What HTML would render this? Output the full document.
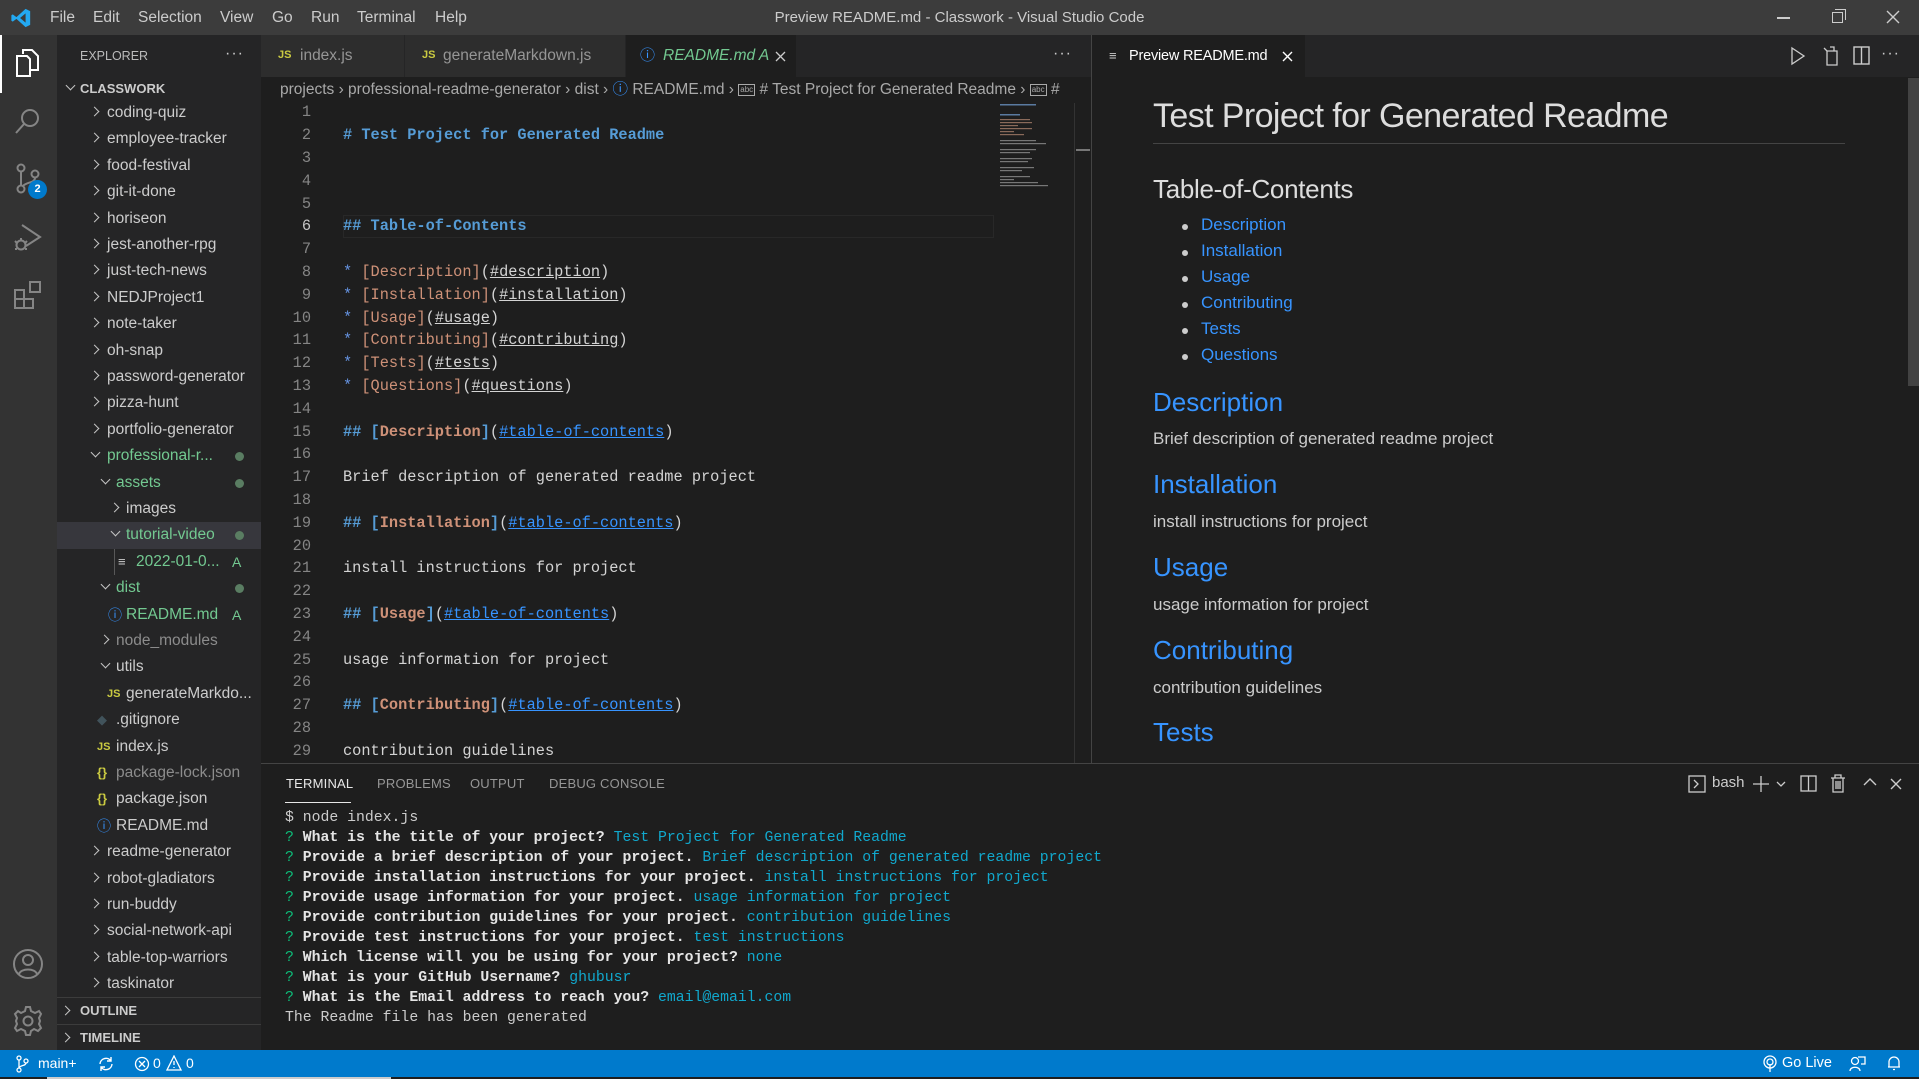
<!DOCTYPE html>
<html><head><meta charset="utf-8">
<style>
*{box-sizing:border-box;margin:0;padding:0}
body{width:1919px;height:1079px;overflow:hidden;background:#1e1e1e;font-family:"Liberation Sans",sans-serif;color:#ccc;position:relative}
.a{position:absolute}
.t{white-space:nowrap}
#title{left:0;top:0;width:1919px;height:35px;background:#3c3c3c}
.menu{top:0;height:35px;line-height:35px;font-size:15.5px;color:#ccc}
#act{left:0;top:35px;width:57px;height:1015px;background:#333}
#side{left:57px;top:35px;width:204px;height:1015px;background:#252526}
.row{position:absolute;left:0;width:204px;height:26.4px;line-height:26.4px;font-size:15.5px;color:#ccc;white-space:nowrap}
.chev{position:absolute;top:8px;width:7px;height:7px;border-right:1.5px solid #c5c5c5;border-bottom:1.5px solid #c5c5c5}
.cr{transform:rotate(-45deg)}
.cd{transform:rotate(45deg);top:6px}
.dot{position:absolute;left:178px;top:9px;width:9px;height:9px;border-radius:50%;background:#5a7d62}
.A{position:absolute;left:175px;color:#73c991;font-size:14px}
.g{color:#73c991}
.js{color:#cbcb41;font-weight:bold;font-size:11px;position:absolute}
.code{font-family:"Liberation Mono",monospace;font-size:15.3px}
.ln{position:absolute;left:270px;width:41px;text-align:right;color:#858585;height:22.8px;line-height:22.8px}
.cl{position:absolute;left:343px;height:22.8px;line-height:22.8px;white-space:pre;color:#d4d4d4}
.h{color:#569cd6;font-weight:bold}
.o{color:#ce9178}
.ob{color:#ce9178;font-weight:bold}
.u{text-decoration:underline}
.bu{color:#3794ff;text-decoration:underline}
.st{color:#6796e6}
.pv{position:absolute;left:1153px;white-space:nowrap}
.li{position:absolute;left:1201px;color:#3794ff;font-size:17px;white-space:nowrap}
.bul{position:absolute;left:1182px;width:6px;height:6px;border-radius:50%;background:#ccc}
.ph2{color:#3794ff;font-size:26px}
.pp{color:#ccc;font-size:17px}
.term{position:absolute;left:285px;font-family:"Liberation Mono",monospace;font-size:14.8px;white-space:pre;color:#ccc;height:20px;line-height:20px}
.q{color:#0dbc79}
.b{font-weight:bold;color:#e5e5e5}
.c{color:#11a8cd}
.ptab{position:absolute;top:776px;font-size:13px;color:#969696;letter-spacing:.2px}
</style></head><body>

<!-- title bar -->
<div id="title" class="a">
<svg class="a" style="left:10px;top:7px" width="22" height="22" viewBox="0 0 24 24"><path d="M17 2 L22 4.5 V19.5 L17 22 L7 13 L3 16 L1.5 15 V9 L3 8 L7 11 Z M17 7 L11 12 L17 17 Z" fill="#23a9f2"/></svg>
<div class="a menu t" style="left:50px">File</div>
<div class="a menu t" style="left:93px">Edit</div>
<div class="a menu t" style="left:138px">Selection</div>
<div class="a menu t" style="left:220px">View</div>
<div class="a menu t" style="left:272px">Go</div>
<div class="a menu t" style="left:311px">Run</div>
<div class="a menu t" style="left:357px">Terminal</div>
<div class="a menu t" style="left:435px">Help</div>
<div class="a menu t" style="left:0;width:1919px;text-align:center;font-size:15px;color:#ccc">Preview README.md - Classwork - Visual Studio Code</div>
<div class="a" style="left:1777px;top:17px;width:13px;height:1.5px;background:#ccc"></div>
<div class="a" style="left:1832px;top:12px;width:11px;height:11px;border:1.3px solid #ccc"></div>
<div class="a" style="left:1835px;top:9px;width:11px;height:11px;border-top:1.3px solid #ccc;border-right:1.3px solid #ccc"></div>
<svg class="a" style="left:1886px;top:10px" width="14" height="14"><path d="M1 1L13 13M13 1L1 13" stroke="#ccc" stroke-width="1.4"/></svg>
</div>

<!-- activity bar -->
<div id="act" class="a">
<div class="a" style="left:0;top:0;width:2px;height:58px;background:#fff"></div>
<svg class="a" style="left:14px;top:13px" width="28" height="30" viewBox="0 0 28 30" fill="none" stroke="#fff" stroke-width="2"><path d="M9 6 V2 H18 L24 8 V22 H16"/><path d="M3 8 H13 L16 11 V28 H3 Z"/></svg>
<svg class="a" style="left:14px;top:72px" width="28" height="28" viewBox="0 0 28 28" fill="none" stroke="#858585" stroke-width="2"><circle cx="16" cy="11" r="8"/><path d="M10 17 L2 26"/></svg>
<svg class="a" style="left:14px;top:128px" width="30" height="32" viewBox="0 0 30 32" fill="none" stroke="#858585" stroke-width="2"><circle cx="7" cy="5" r="3.5"/><circle cx="7" cy="26" r="3.5"/><circle cx="21" cy="11" r="3.5"/><path d="M7 9V22M21 15C21 20 12 19 9 23"/></svg>
<div class="a" style="left:28px;top:145px;width:19px;height:19px;border-radius:50%;background:#007acc;color:#fff;font-size:11px;font-weight:bold;text-align:center;line-height:19px">2</div>
<svg class="a" style="left:12px;top:187px" width="32" height="32" viewBox="0 0 32 32" fill="none" stroke="#858585" stroke-width="2"><path d="M10 3 L28 15 L14 24"/><circle cx="9" cy="23" r="4.5"/><path d="M3 19L5 21M15 19L13 21M3 27H5M13 27H15M9 18V16"/></svg>
<svg class="a" style="left:13px;top:245px" width="30" height="30" viewBox="0 0 30 30" fill="none" stroke="#858585" stroke-width="2"><rect x="2" y="10" width="9" height="9"/><rect x="2" y="19" width="9" height="9"/><rect x="11" y="19" width="9" height="9"/><rect x="17" y="2" width="10" height="10"/></svg>
<svg class="a" style="left:12px;top:913px" width="32" height="32" viewBox="0 0 32 32" fill="none" stroke="#858585" stroke-width="2"><circle cx="16" cy="16" r="14"/><circle cx="16" cy="12" r="5"/><path d="M7 26C9 20 23 20 25 26"/></svg>
<svg class="a" style="left:12px;top:970px" width="32" height="32" viewBox="0 0 32 32" fill="none" stroke="#858585" stroke-width="2"><circle cx="16" cy="16" r="4.5"/><path d="M14 2H18L19 6L23 8L27 6L29 9L27 13L28 16L27 19L29 23L26 26L22 24L19 26L18 30H14L13 26L9 24L5 26L3 23L5 19L4 16L5 13L3 9L6 6L9 8L13 6Z"/></svg>
</div>

<!-- sidebar -->
<div id="side" class="a">
<div class="a t" style="left:23px;top:0;height:42px;line-height:42px;font-size:12.5px;color:#bbb">EXPLORER</div>
<div class="a t" style="left:168px;top:0;height:38px;line-height:38px;font-size:16px;color:#ccc;letter-spacing:1px">···</div>
<div class="a" style="left:0;top:42px;width:204px;height:23px">
<div class="chev cd" style="left:10px;top:5px"></div>
<div class="a t" style="left:23px;top:0;line-height:23px;font-size:13px;font-weight:bold;color:#ccc">CLASSWORK</div>
</div>
<div class="a" style="left:0;top:65px;width:204px;height:950px">
<div class="row" style="top:0"><div class="chev cr" style="left:34px"></div><span class="a" style="left:50px">coding-quiz</span></div>
<div class="row" style="top:26.4px"><div class="chev cr" style="left:34px"></div><span class="a" style="left:50px">employee-tracker</span></div>
<div class="row" style="top:52.8px"><div class="chev cr" style="left:34px"></div><span class="a" style="left:50px">food-festival</span></div>
<div class="row" style="top:79.2px"><div class="chev cr" style="left:34px"></div><span class="a" style="left:50px">git-it-done</span></div>
<div class="row" style="top:105.6px"><div class="chev cr" style="left:34px"></div><span class="a" style="left:50px">horiseon</span></div>
<div class="row" style="top:132px"><div class="chev cr" style="left:34px"></div><span class="a" style="left:50px">jest-another-rpg</span></div>
<div class="row" style="top:158.4px"><div class="chev cr" style="left:34px"></div><span class="a" style="left:50px">just-tech-news</span></div>
<div class="row" style="top:184.8px"><div class="chev cr" style="left:34px"></div><span class="a" style="left:50px">NEDJProject1</span></div>
<div class="row" style="top:211.2px"><div class="chev cr" style="left:34px"></div><span class="a" style="left:50px">note-taker</span></div>
<div class="row" style="top:237.6px"><div class="chev cr" style="left:34px"></div><span class="a" style="left:50px">oh-snap</span></div>
<div class="row" style="top:264px"><div class="chev cr" style="left:34px"></div><span class="a" style="left:50px">password-generator</span></div>
<div class="row" style="top:290.4px"><div class="chev cr" style="left:34px"></div><span class="a" style="left:50px">pizza-hunt</span></div>
<div class="row" style="top:316.8px"><div class="chev cr" style="left:34px"></div><span class="a" style="left:50px">portfolio-generator</span></div>
<div class="row g" style="top:343.2px"><div class="chev cd" style="left:35px"></div><span class="a" style="left:50px">professional-r...</span><div class="dot"></div></div>
<div class="row g" style="top:369.6px"><div class="chev cd" style="left:45px"></div><span class="a" style="left:59px">assets</span><div class="dot"></div></div>
<div class="row" style="top:396px"><div class="chev cr" style="left:54px"></div><span class="a" style="left:69px">images</span></div>
<div class="row g" style="top:422.4px;background:#37373d"><div class="chev cd" style="left:55px"></div><span class="a" style="left:69px">tutorial-video</span><div class="dot"></div></div>
<div class="row g" style="top:448.8px"><div class="a" style="left:57px;top:0;width:1px;height:26.4px;background:#585858"></div><span class="a" style="left:61px;color:#ccc;font-size:13px">≡</span><span class="a" style="left:79px">2022-01-0...</span><span class="A">A</span></div>
<div class="row g" style="top:475.2px"><div class="chev cd" style="left:45px"></div><span class="a" style="left:59px">dist</span><div class="dot"></div></div>
<div class="row g" style="top:501.6px"><span class="a" style="left:51px;color:#3794ff;font-size:14px">ⓘ</span><span class="a" style="left:69px">README.md</span><span class="A">A</span></div>
<div class="row" style="top:528px;color:#8c8c8c"><div class="chev cr" style="left:44px"></div><span class="a" style="left:59px">node_modules</span></div>
<div class="row" style="top:554.4px"><div class="chev cd" style="left:45px"></div><span class="a" style="left:59px">utils</span></div>
<div class="row" style="top:580.8px"><span class="js" style="left:50px;top:0">JS</span><span class="a" style="left:69px">generateMarkdo...</span></div>
<div class="row" style="top:607.2px"><span class="a" style="left:40px;color:#41535b;font-size:13px">◆</span><span class="a" style="left:59px">.gitignore</span></div>
<div class="row" style="top:633.6px"><span class="js" style="left:40px;top:0">JS</span><span class="a" style="left:59px">index.js</span></div>
<div class="row" style="top:660px;color:#8c8c8c"><span class="a" style="left:40px;color:#cbcb41;font-size:13px;font-weight:bold">{}</span><span class="a" style="left:59px">package-lock.json</span></div>
<div class="row" style="top:686.4px"><span class="a" style="left:40px;color:#cbcb41;font-size:13px;font-weight:bold">{}</span><span class="a" style="left:59px">package.json</span></div>
<div class="row" style="top:712.8px"><span class="a" style="left:40px;color:#3794ff;font-size:14px">ⓘ</span><span class="a" style="left:59px">README.md</span></div>
<div class="row" style="top:739.2px"><div class="chev cr" style="left:34px"></div><span class="a" style="left:50px">readme-generator</span></div>
<div class="row" style="top:765.6px"><div class="chev cr" style="left:34px"></div><span class="a" style="left:50px">robot-gladiators</span></div>
<div class="row" style="top:792px"><div class="chev cr" style="left:34px"></div><span class="a" style="left:50px">run-buddy</span></div>
<div class="row" style="top:818.4px"><div class="chev cr" style="left:34px"></div><span class="a" style="left:50px">social-network-api</span></div>
<div class="row" style="top:844.8px"><div class="chev cr" style="left:34px"></div><span class="a" style="left:50px">table-top-warriors</span></div>
<div class="row" style="top:871.2px"><div class="chev cr" style="left:34px"></div><span class="a" style="left:50px">taskinator</span></div>
</div>
<div class="a" style="left:0;top:962px;width:204px;height:1px;background:#3c3c3c"></div>
<div class="a" style="left:0;top:963px;width:204px;height:26px"><div class="chev cr" style="left:5px;top:9px"></div><span class="a t" style="left:23px;line-height:26px;font-size:13px;font-weight:bold;color:#ccc">OUTLINE</span></div>
<div class="a" style="left:0;top:989px;width:204px;height:1px;background:#3c3c3c"></div>
<div class="a" style="left:0;top:990px;width:204px;height:26px"><div class="chev cr" style="left:5px;top:9px"></div><span class="a t" style="left:23px;line-height:26px;font-size:13px;font-weight:bold;color:#ccc">TIMELINE</span></div>
</div>

<!-- editor tabs -->
<div class="a" style="left:261px;top:35px;width:831px;height:42px;background:#252526"></div>
<div class="a" style="left:261px;top:35px;width:143px;height:42px;background:#2d2d2d"><span class="js" style="left:17px;top:14px">JS</span><span class="a t" style="left:39px;top:0;line-height:42px;font-size:15.5px;color:#969696">index.js</span></div>
<div class="a" style="left:405px;top:35px;width:220px;height:42px;background:#2d2d2d"><span class="js" style="left:17px;top:14px">JS</span><span class="a t" style="left:38px;top:0;line-height:42px;font-size:15.5px;color:#969696">generateMarkdown.js</span></div>
<div class="a" style="left:626px;top:35px;width:170px;height:42px;background:#1e1e1e"><span class="a" style="left:14px;top:0;line-height:42px;color:#3794ff;font-size:15px">ⓘ</span><span class="a t" style="left:37px;top:0;line-height:42px;font-size:15.5px;color:#73c991;font-style:italic">README.md A</span><svg class="a" style="left:149px;top:16px" width="11" height="11"><path d="M1 1L10 10M10 1L1 10" stroke="#ccc" stroke-width="1.3"/></svg></div>
<div class="a t" style="left:1053px;top:35px;line-height:38px;font-size:16px;color:#ccc;letter-spacing:1px">···</div>

<!-- breadcrumb -->
<div class="a t" style="left:280px;top:77px;height:26px;line-height:26px;font-size:15.5px;color:#a9a9a9;width:810px;overflow:hidden">projects › professional-readme-generator › dist › <span style="color:#3794ff">ⓘ</span> README.md › <span style="display:inline-block;border:1px solid #a9a9a9;font-size:8px;line-height:10px;padding:0 1px;vertical-align:2px">abc</span> # Test Project for Generated Readme › <span style="display:inline-block;border:1px solid #a9a9a9;font-size:8px;line-height:10px;padding:0 1px;vertical-align:2px">abc</span> #</div>

<!-- editor -->
<div class="a" style="left:343px;top:215px;width:651px;height:23px;border:1px solid #282828"></div>
<div class="code">
<div class="ln" style="top:101.3px">1</div>
<div class="ln" style="top:124.1px">2</div>
<div class="ln" style="top:146.9px">3</div>
<div class="ln" style="top:169.7px">4</div>
<div class="ln" style="top:192.5px">5</div>
<div class="ln" style="top:215.3px;color:#c6c6c6">6</div>
<div class="ln" style="top:238.1px">7</div>
<div class="ln" style="top:260.9px">8</div>
<div class="ln" style="top:283.7px">9</div>
<div class="ln" style="top:306.5px">10</div>
<div class="ln" style="top:329.3px">11</div>
<div class="ln" style="top:352.1px">12</div>
<div class="ln" style="top:374.9px">13</div>
<div class="ln" style="top:397.7px">14</div>
<div class="ln" style="top:420.5px">15</div>
<div class="ln" style="top:443.3px">16</div>
<div class="ln" style="top:466.1px">17</div>
<div class="ln" style="top:488.9px">18</div>
<div class="ln" style="top:511.7px">19</div>
<div class="ln" style="top:534.5px">20</div>
<div class="ln" style="top:557.3px">21</div>
<div class="ln" style="top:580.1px">22</div>
<div class="ln" style="top:602.9px">23</div>
<div class="ln" style="top:625.7px">24</div>
<div class="ln" style="top:648.5px">25</div>
<div class="ln" style="top:671.3px">26</div>
<div class="ln" style="top:694.1px">27</div>
<div class="ln" style="top:716.9px">28</div>
<div class="ln" style="top:739.7px;height:23px;overflow:hidden">29</div>

<div class="cl h" style="top:124.1px"># Test Project for Generated Readme</div>
<div class="cl h" style="top:215.3px">## Table-of-Contents</div>
<div class="cl" style="top:260.9px"><span class="st">*</span> <span class="o">[Description]</span>(<span class="u">#description</span>)</div>
<div class="cl" style="top:283.7px"><span class="st">*</span> <span class="o">[Installation]</span>(<span class="u">#installation</span>)</div>
<div class="cl" style="top:306.5px"><span class="st">*</span> <span class="o">[Usage]</span>(<span class="u">#usage</span>)</div>
<div class="cl" style="top:329.3px"><span class="st">*</span> <span class="o">[Contributing]</span>(<span class="u">#contributing</span>)</div>
<div class="cl" style="top:352.1px"><span class="st">*</span> <span class="o">[Tests]</span>(<span class="u">#tests</span>)</div>
<div class="cl" style="top:374.9px"><span class="st">*</span> <span class="o">[Questions]</span>(<span class="u">#questions</span>)</div>
<div class="cl" style="top:420.5px"><span class="h">## [</span><span class="ob">Description</span><span class="h">]</span>(<span class="bu">#table-of-contents</span>)</div>
<div class="cl" style="top:466.1px">Brief description of generated readme project</div>
<div class="cl" style="top:511.7px"><span class="h">## [</span><span class="ob">Installation</span><span class="h">]</span>(<span class="bu">#table-of-contents</span>)</div>
<div class="cl" style="top:557.3px">install instructions for project</div>
<div class="cl" style="top:602.9px"><span class="h">## [</span><span class="ob">Usage</span><span class="h">]</span>(<span class="bu">#table-of-contents</span>)</div>
<div class="cl" style="top:648.5px">usage information for project</div>
<div class="cl" style="top:694.1px"><span class="h">## [</span><span class="ob">Contributing</span><span class="h">]</span>(<span class="bu">#table-of-contents</span>)</div>
<div class="cl" style="top:739.7px;height:23px;overflow:hidden">contribution guidelines</div>
</div>

<!-- minimap -->
<svg class="a" style="left:998px;top:103px" width="76" height="85">
<g fill="#5a7aa0"><rect x="2" y="1" width="36" height="1.5"/><rect x="2" y="11" width="20" height="1.5"/></g>
<g fill="#8a6a5a"><rect x="2" y="16" width="30" height="1.2"/><rect x="2" y="19" width="32" height="1.2"/><rect x="2" y="22" width="18" height="1.2"/><rect x="2" y="25" width="32" height="1.2"/><rect x="2" y="28" width="14" height="1.2"/><rect x="2" y="31" width="24" height="1.2"/></g>
<g fill="#777"><rect x="2" y="37" width="36" height="1.2"/><rect x="2" y="40" width="46" height="1.2"/><rect x="2" y="46" width="36" height="1.2"/><rect x="2" y="49" width="30" height="1.2"/><rect x="2" y="55" width="32" height="1.2"/><rect x="2" y="58" width="28" height="1.2"/><rect x="2" y="64" width="34" height="1.2"/><rect x="2" y="67" width="22" height="1.2"/><rect x="2" y="73" width="30" height="1.2"/><rect x="2" y="76" width="14" height="1.2"/><rect x="2" y="79" width="38" height="1.2"/><rect x="2" y="82" width="48" height="1.2"/></g>
</svg>
<div class="a" style="left:1074px;top:103px;width:1px;height:660px;background:#333"></div>
<div class="a" style="left:1076px;top:149px;width:14px;height:2px;background:#777"></div>

<!-- preview group -->
<div class="a" style="left:1091px;top:35px;width:1px;height:728px;background:#444"></div>
<div class="a" style="left:1092px;top:35px;width:827px;height:42px;background:#252526"></div>
<div class="a" style="left:1092px;top:35px;width:213px;height:42px;background:#1e1e1e"><span class="a t" style="left:17px;top:0;line-height:42px;font-size:13px;color:#ccc">≡</span><span class="a t" style="left:37px;top:0;line-height:42px;font-size:14.5px;color:#fff;letter-spacing:-0.2px">Preview README.md</span><svg class="a" style="left:190px;top:16px" width="11" height="11"><path d="M1 1L10 10M10 1L1 10" stroke="#fff" stroke-width="1.4"/></svg></div>
<svg class="a" style="left:1790px;top:46px" width="16" height="20"><path d="M2 2L14 10L2 18Z" fill="none" stroke="#ccc" stroke-width="1.3"/></svg>
<svg class="a" style="left:1822px;top:45px" width="18" height="22" fill="none" stroke="#ccc" stroke-width="1.3"><path d="M5 6H15V20H5Z"/><path d="M5 6L2 3M8 2H12V6"/></svg>
<svg class="a" style="left:1853px;top:46px" width="18" height="20" fill="none" stroke="#ccc" stroke-width="1.4"><rect x="1" y="1" width="15" height="17"/><path d="M8.5 1V18"/></svg>
<div class="a t" style="left:1881px;top:35px;line-height:38px;font-size:16px;color:#ccc;letter-spacing:1px">···</div>

<div class="pv" style="top:95px;font-size:34px;color:#ddd;letter-spacing:-0.6px;line-height:42px">Test Project for Generated Readme</div>
<div class="a" style="left:1153px;top:143px;width:692px;height:1px;background:#444"></div>
<div class="pv" style="top:173px;font-size:26px;color:#ddd;line-height:32px;letter-spacing:-0.3px">Table-of-Contents</div>
<div class="bul" style="top:224px"></div><div class="li" style="top:215px">Description</div>
<div class="bul" style="top:250px"></div><div class="li" style="top:241px">Installation</div>
<div class="bul" style="top:276px"></div><div class="li" style="top:267px">Usage</div>
<div class="bul" style="top:302px"></div><div class="li" style="top:293px">Contributing</div>
<div class="bul" style="top:328px"></div><div class="li" style="top:319px">Tests</div>
<div class="bul" style="top:354px"></div><div class="li" style="top:345px">Questions</div>
<div class="pv ph2" style="top:386px;line-height:32px">Description</div>
<div class="pv pp" style="top:428px;line-height:22px">Brief description of generated readme project</div>
<div class="pv ph2" style="top:468px;line-height:32px">Installation</div>
<div class="pv pp" style="top:511px;line-height:22px">install instructions for project</div>
<div class="pv ph2" style="top:551px;line-height:32px">Usage</div>
<div class="pv pp" style="top:594px;line-height:22px">usage information for project</div>
<div class="pv ph2" style="top:634px;line-height:32px">Contributing</div>
<div class="pv pp" style="top:677px;line-height:22px">contribution guidelines</div>
<div class="pv ph2" style="top:716px;line-height:32px">Tests</div>
<div class="a" style="left:1908px;top:78px;width:11px;height:308px;background:#424242"></div>

<!-- panel -->
<div class="a" style="left:261px;top:763px;width:1658px;height:287px;background:#1e1e1e;border-top:1px solid #444"></div>
<div class="ptab t" style="left:286px;color:#e7e7e7">TERMINAL</div>
<div class="a" style="left:285px;top:802px;width:66px;height:1px;background:#e7e7e7"></div>
<div class="ptab t" style="left:377px">PROBLEMS</div>
<div class="ptab t" style="left:470px">OUTPUT</div>
<div class="ptab t" style="left:549px">DEBUG CONSOLE</div>
<svg class="a" style="left:1688px;top:775px" width="18" height="18" fill="none" stroke="#ccc" stroke-width="1.3"><rect x="1" y="1" width="16" height="16"/><path d="M6 5L10 9L6 13"/></svg>
<div class="a t" style="left:1712px;top:774px;font-size:15px;color:#ccc">bash</div>
<svg class="a" style="left:1752px;top:775px" width="36" height="18" fill="none" stroke="#ccc" stroke-width="1.3"><path d="M9 1V17M1 9H17M25 7L29 11L33 7"/></svg>
<svg class="a" style="left:1800px;top:775px" width="18" height="18" fill="none" stroke="#ccc" stroke-width="1.3"><rect x="1" y="1" width="15" height="15"/><path d="M8.5 1V16"/></svg>
<svg class="a" style="left:1830px;top:774px" width="16" height="19" fill="none" stroke="#ccc" stroke-width="1.3"><path d="M1 4H15M5 4V1H11V4M3 4V18H13V4M6 7V15M8 7V15M10 7V15"/></svg>
<svg class="a" style="left:1863px;top:777px" width="14" height="10" fill="none" stroke="#ccc" stroke-width="1.4"><path d="M1 8L7 2L13 8"/></svg>
<svg class="a" style="left:1890px;top:778px" width="12" height="12" fill="none" stroke="#ccc" stroke-width="1.4"><path d="M1 1L11 11M11 1L1 11"/></svg>

<div class="term" style="top:808px">$ node index.js</div>
<div class="term" style="top:828px"><span class="q">?</span> <span class="b">What is the title of your project?</span> <span class="c">Test Project for Generated Readme</span></div>
<div class="term" style="top:848px"><span class="q">?</span> <span class="b">Provide a brief description of your project.</span> <span class="c">Brief description of generated readme project</span></div>
<div class="term" style="top:868px"><span class="q">?</span> <span class="b">Provide installation instructions for your project.</span> <span class="c">install instructions for project</span></div>
<div class="term" style="top:888px"><span class="q">?</span> <span class="b">Provide usage information for your project.</span> <span class="c">usage information for project</span></div>
<div class="term" style="top:908px"><span class="q">?</span> <span class="b">Provide contribution guidelines for your project.</span> <span class="c">contribution guidelines</span></div>
<div class="term" style="top:928px"><span class="q">?</span> <span class="b">Provide test instructions for your project.</span> <span class="c">test instructions</span></div>
<div class="term" style="top:948px"><span class="q">?</span> <span class="b">Which license will you be using for your project?</span> <span class="c">none</span></div>
<div class="term" style="top:968px"><span class="q">?</span> <span class="b">What is your GitHub Username?</span> <span class="c">ghubusr</span></div>
<div class="term" style="top:988px"><span class="q">?</span> <span class="b">What is the Email address to reach you?</span> <span class="c">email@email.com</span></div>
<div class="term" style="top:1008px">The Readme file has been generated</div>

<!-- status bar -->
<div class="a" style="left:0;top:1050px;width:1919px;height:27px;background:#007acc"></div>
<div class="a" style="left:0;top:1077px;width:1919px;height:2px;background:#1e1e1e"></div>
<div class="a" style="left:47px;top:1077px;width:344px;height:2px;background:#ccc"></div>
<svg class="a" style="left:15px;top:1055px" width="14" height="18" fill="none" stroke="#fff" stroke-width="1.3"><circle cx="4" cy="3" r="2"/><circle cx="4" cy="15" r="2"/><circle cx="11" cy="6" r="2"/><path d="M4 5V13M11 8C11 11 5 10 4 13"/></svg>
<div class="a t" style="left:38px;top:1050px;line-height:27px;font-size:14px;color:#fff">main+</div>
<svg class="a" style="left:98px;top:1056px" width="16" height="16" fill="none" stroke="#fff" stroke-width="1.4"><path d="M2 8A6 6 0 0 1 13 5M14 8A6 6 0 0 1 3 11M13 1V5H9M3 15V11H7"/></svg>
<svg class="a" style="left:134px;top:1056px" width="16" height="16" fill="none" stroke="#fff" stroke-width="1.3"><circle cx="8" cy="8" r="6.5"/><path d="M5 5L11 11M11 5L5 11"/></svg>
<div class="a t" style="left:153px;top:1050px;line-height:27px;font-size:14px;color:#fff">0</div>
<svg class="a" style="left:166px;top:1055px" width="16" height="16" fill="none" stroke="#fff" stroke-width="1.3"><path d="M8 1L15 15H1Z M8 6V10M8 12V13"/></svg>
<div class="a t" style="left:186px;top:1050px;line-height:27px;font-size:14px;color:#fff">0</div>
<svg class="a" style="left:1762px;top:1055px" width="16" height="18" fill="none" stroke="#fff" stroke-width="1.3"><circle cx="8" cy="7" r="6"/><circle cx="8" cy="7" r="3"/><path d="M8 9V17"/></svg>
<div class="a t" style="left:1782px;top:1050px;line-height:27px;font-size:14.5px;color:#fff">Go Live</div>
<svg class="a" style="left:1849px;top:1055px" width="17" height="17" fill="none" stroke="#fff" stroke-width="1.3"><circle cx="6" cy="6" r="3.5"/><path d="M1 16C1 11 11 11 11 16M9 2H16V9H12"/></svg>
<svg class="a" style="left:1887px;top:1054px" width="14" height="18" fill="none" stroke="#fff" stroke-width="1.3"><path d="M2 13V8A5 5 0 0 1 12 8V13H1H13M6 15.5H8"/></svg>
</body></html>
